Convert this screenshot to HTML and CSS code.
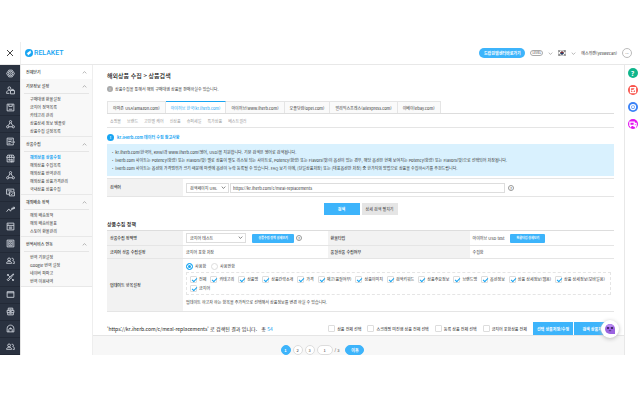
FILE: index.html
```html
<!DOCTYPE html>
<html lang="ko">

<head>
    <meta charset="UTF-8">
    <title>RELAKET</title>
    <link rel="stylesheet" href="styles.css">
</head>

<body>
    <svg class="defs">
        <symbol id="up" viewBox="0 0 8 5"><path d="M1 4l3-3 3 3" /></symbol>
        <symbol id="down" viewBox="0 0 8 5"><path d="M1 1l3 3 3-3" /></symbol>
        <symbol id="users" viewBox="0 0 16 16"><circle cx="5.500" cy="6" r="2.500" /><path d="M1 13c0-5 9-5 9 0zM10 4c4-1 4 4 2 4 3 1 3 3 3 5h-3" /></symbol>
    </svg>

    <header class="header">
        <button class="close" aria-label="close"><svg viewBox="0 0 8 8"><path d="M1 1l6 6M7 1L1 7" /></svg></button>
        <a class="logo" href="#">
            <svg viewBox="0 0 16 16"><circle cx="8" cy="8" r="8" fill="#18a5f2" /><path d="M3 9l8-6 1 2-6 5zM13 7l-7 6-1-2 5-5z" fill="#fff" /></svg>
            RELAKET
        </a>
        <div class="user-menu">
            <button class="center-link">드랍윈템센터바로가기</button>
            <span class="level">LEVEL</span>
            <svg class="caret"><use href="#down" /></svg>
            <svg class="flag" viewBox="0 0 16 12"><rect width="16" height="12" fill="#fff" /><path d="M5 6a3 3 0 0 1 6 0z" fill="#d8263c" /><path d="M5 6a3 3 0 0 0 6 0z" fill="#17479e" /><path d="M1 3l2-2M2 4l2-2M12 1l3 2M11 2l3 2M1 9l3 2M2 8l3 2M12 10l2-2M13 11l2-2" stroke="#222" /></svg>
            <svg class="caret"><use href="#down" /></svg>
            <span class="user-name">에스위캔(yeswecan)</span>
            <button class="more" aria-label="more">···</button>
        </div>
    </header>

    <div class="page">
        <nav class="icon-bar">
            <a href="#"><svg viewBox="0 0 16 16"><path d="M5 2h6l4 6-4 6H5L1 8z" /><circle cx="8" cy="8" r="4" /><circle cx="8" cy="8" r="1.500" /></svg></a>
            <a href="#"><svg viewBox="0 0 16 16"><circle cx="6" cy="4" r="2.500" /><path d="M1 13c0-6 5-6 7-4M1 13h5M8 8h7v6H8zM10 8V6h3v2" /></svg></a>
            <a href="#"><svg viewBox="0 0 16 16"><path d="M2 2h12v12H2zM5 2v4h6V2M5 11h6" /></svg></a>
            <a href="#"><svg viewBox="0 0 16 16"><circle cx="8" cy="3" r="2" /><circle cx="3" cy="12" r="2" /><circle cx="13" cy="12" r="2" /><path d="M7 5l-3 5M9 5l3 5M5 12h6" /></svg></a>
            <a href="#"><svg viewBox="0 0 16 16"><path d="M13 7V2H2v12h11v-3M4 5h7M4 8h5M4 11h4M9 9h6M13 7l2 2-2 2" /></svg></a>
            <a href="#"><svg viewBox="0 0 16 16"><path d="M3 2h10l2 4H1zM2 6v8h12V6M6 2v4M10 2v4M5 9h2v2H5zM9 9h2v5H9z" /></svg></a>
            <a href="#"><svg viewBox="0 0 16 16"><circle cx="8" cy="3" r="2" /><circle cx="3" cy="12" r="2" /><circle cx="13" cy="12" r="2" /><path d="M7 5l-3 5M9 5l3 5M5 12h6" /></svg></a>
            <a href="#"><svg viewBox="0 0 16 16"><path d="M14 6V2H1v9h5M3 5h7M6 7h9v7H6zM8 10l2 2 3-3" /></svg></a>
            <a href="#"><svg viewBox="0 0 16 16"><path d="M1 12l4-5 3 4 3-6 1 3 3-4M12 4h3v3" /></svg></a>
            <a href="#"><svg viewBox="0 0 16 16"><path d="M2 2h12v12H2zM2 6h12M5 9h6M5 11h6M4 4h1" /></svg></a>
            <a href="#"><svg viewBox="0 0 16 16"><path d="M2 2h12v12H2zM5 4h6v8H5z" /><circle cx="8" cy="8" r="1.500" /></svg></a>
            <a href="#"><svg><use href="#users" /></svg></a>
            <a href="#"><svg viewBox="0 0 16 16"><path d="M2 2l5 5M14 2L4 14l-2-2L12 2zM10 10l4 4M2 5l3-3M11 14l3-3" /></svg></a>
            <a href="#"><svg viewBox="0 0 16 16"><path d="M2 3h12v10H2zM2 5h12" /></svg></a>
            <a href="#"><svg viewBox="0 0 16 16"><path d="M4 6V2h8v4M2 6h12v4H2zM3 10v4h10v-4M6 4h4M6 8h4M6 12h4" /></svg></a>
            <a href="#"><svg viewBox="0 0 16 16"><path d="M2 14V8c0-8 12-8 12 0v6zM5 14v-4c0-3 6-3 6 0v4" /><circle cx="8" cy="8" r="1" /></svg></a>
            <a href="#"><svg><use href="#users" /></svg></a>
        </nav>

        <aside class="side-menu">
            <button class="menu-title close-all">전체닫기<svg class="caret"><use href="#up" /></svg></button>
            <section class="menu-group">
                <button class="menu-title">기본정보 설정<svg class="caret"><use href="#up" /></svg></button>
                <ul>
                    <li><a href="#">구매대행 환율설정</a></li>
                    <li><a href="#">금지어 정책목록</a></li>
                    <li><a href="#">카테고리 관리</a></li>
                    <li><a href="#">상품상세 정보 템플릿</a></li>
                    <li><a href="#">상품수집 설정목록</a></li>
                </ul>
            </section>
            <section class="menu-group">
                <button class="menu-title">상품수집<svg class="caret"><use href="#up" /></svg></button>
                <ul>
                    <li><a class="active" href="#">해외상품 상품수집</a></li>
                    <li><a href="#">해외상품 수집목록</a></li>
                    <li><a href="#">해외상품 번역관리</a></li>
                    <li><a href="#">해외상품 상품가격관리</a></li>
                    <li><a href="#">국내상품 상품수집</a></li>
                </ul>
            </section>
            <section class="menu-group">
                <button class="menu-title">해외배송 정책<svg class="caret"><use href="#up" /></svg></button>
                <ul>
                    <li><a href="#">해외 배송정책</a></li>
                    <li><a href="#">해외 배송비율표</a></li>
                    <li><a href="#">스토어 환율관리</a></li>
                </ul>
            </section>
            <section class="menu-group">
                <button class="menu-title">번역서비스 연동<svg class="caret"><use href="#up" /></svg></button>
                <ul>
                    <li><a href="#">번역 기본설정</a></li>
                    <li><a href="#">Google 번역 설정</a></li>
                    <li><a href="#">네이버 파파고</a></li>
                    <li><a href="#">번역 이용내역</a></li>
                </ul>
            </section>
        </aside>

        <main class="main">
            <div class="content">
                <h1>해외상품 수집 &gt; 상품검색</h1>
                <p class="intro"><span class="dot">!</span>상품수집을 통해서 해외 구매대행 상품을 판매하실수 있습니다.</p>

                <nav class="tabs">
                    <a href="#">아마존 USA(amazon.com)</a>
                    <a class="active" href="#">아이허브 한국(kr.iherb.com)</a>
                    <a href="#">아이허브(www.iherb.com)</a>
                    <a href="#">오플닷컴(opel.com)</a>
                    <a href="#">알리익스프레스(aliexpress.com)</a>
                    <a href="#">이베이(ebay.com)</a>
                </nav>
                <nav class="categories">
                    <a href="#">쇼핑몰</a>
                    <a href="#">브랜드</a>
                    <a href="#">고민별 케어</a>
                    <a href="#">신상품</a>
                    <a href="#">슈퍼세일</a>
                    <a href="#">특가상품</a>
                    <a href="#">베스트셀러</a>
                </nav>

                <h2 class="notice-title"><span>!</span>kr.iHerb.com 데이터 수집 참고사항</h2>
                <ul class="notice">
                    <li>kr.iherb.com(한국어, KRW)과 www.iherb.com(영어, USD)을 지원합니다. 기본 검색은 영어로 검색됩니다.</li>
                    <li>iHerb.com 사이트는 Potency(함량) 또는 Flavors(맛) 별로 상품이 별도 리스팅 되는 사이트로, Potency(함량) 또는 Flavors(맛)이 옵션이 있는 경우, 해당 옵션은 현재 보여지는 Potency(함량) 또는 Flavors(맛)으로 선택되어 저장됩니다.</li>
                    <li>iHerb.com 사이트는 옵션의 가격범위가 크기 때문에 마켓에 옵션이 누락 등록될 수 있습니다. FAQ 보기 이에, [단일상품저장] 또는 [대표옵션만 저장] 중 한가지의 방법으로 상품을 수집하시기를 추천드립니다.</li>
                </ul>

                <form class="search">
                    <label class="search-label" for="keyword">검색어</label>
                    <div class="search-field">
                        <div class="select url-select">
                            <select aria-label="검색 방법"><option>검색페이지 URL</option></select>
                            <svg class="caret"><use href="#down" /></svg>
                        </div>
                        <input id="keyword" type="text" value="https://kr.iherb.com/c/meal-replacements">
                        <span class="help">?</span>
                    </div>
                </form>
                <div class="search-buttons">
                    <button class="primary">검색</button>
                    <button>상세 검색 펼치기</button>
                </div>

                <h2>상품수집 정책</h2>
                <table class="policy">
                    <tr>
                        <th><label for="policy">상품수집 정책명</label></th>
                        <td>
                            <div class="cell">
                                <div class="select policy-select">
                                    <select id="policy"><option>금지어 테스트</option></select>
                                    <svg class="caret"><use href="#down" /></svg>
                                </div>
                                <button class="small-button">상품수집 정책 상세보기</button>
                                <span class="help">?</span>
                            </div>
                        </td>
                        <th>환율타입</th>
                        <td>
                            <div class="cell">아이허브 USD test<button class="small-button rate-button">환율타입 상세보기</button></div>
                        </td>
                    </tr>
                    <tr class="short">
                        <th>금지어 상품 수집설정</th>
                        <td>금지어 포함 저장</td>
                        <th>품절상품 수집여부</th>
                        <td>수집함</td>
                    </tr>
                    <tr>
                        <th>업데이트 항목설정</th>
                        <td colspan="3">
                            <div class="radios">
                                <label><input type="radio" name="use" checked>사용함</label>
                                <label><input type="radio" name="use">사용안함</label>
                            </div>
                            <div class="checks">
                                <label><input type="checkbox" checked>전체</label>
                                <label><input type="checkbox" checked>카테고리</label>
                                <label><input type="checkbox" checked>상품명</label>
                                <label><input type="checkbox" checked>상품간략소개</label>
                                <label><input type="checkbox" checked>가격</label>
                                <label><input type="checkbox" checked>재고(품절여부)</label>
                                <label><input type="checkbox" checked>상품이미지</label>
                                <label><input type="checkbox" checked>검색키워드</label>
                                <label><input type="checkbox" checked>상품주요정보</label>
                                <label><input type="checkbox" checked>브랜드명</label>
                                <label><input type="checkbox" checked>옵션정보</label>
                                <label><input type="checkbox" checked>상품 상세정보(웹용)</label>
                                <label><input type="checkbox" checked>상품 상세정보(모바일용)</label>
                                <label><input type="checkbox" checked>금지어</label>
                            </div>
                            <p class="hint">업데이트 하고자 하는 항목을 추가적으로 선택해서 상품정보를 변경 하실 수 있습니다.</p>
                        </td>
                    </tr>
                </table>

                <div class="result">
                    <p>'https://kr.iherb.com/c/meal-replacements' 로 검색된 결과 입니다. &nbsp; 총 <b>54</b></p>
                    <div class="result-actions">
                        <label><input type="checkbox">상품 전체 선택</label>
                        <label><input type="checkbox">스크래핑 미진행 상품 전체 선택</label>
                        <label><input type="checkbox">등록 상품 전체 선택</label>
                        <label><input type="checkbox">금지어 포함상품 전체</label>
                        <div class="save-buttons">
                            <button class="primary">선택 상품저장/수정</button>
                            <button class="primary">검색 상품저장</button>
                        </div>
                    </div>
                </div>
            </div>

            <div class="paging">
                <button class="current">1</button>
                <button>2</button>
                <button>3</button>
                <input type="text" value="1" aria-label="page"><span>/ 3</span>
                <button class="go">이동</button>
            </div>

            <button class="chat" aria-label="chat">
                <svg viewBox="0 0 24 24"><path d="M12 2a10 10 0 1 0 0 20h10V12A10 10 0 0 0 12 2z" fill="#9b63e0" /><path d="M3 8a10 10 0 0 1 18 0c-3-2-5 0-9 0S6 6 3 8z" fill="#b98af0" /><circle cx="8" cy="10" r="2" fill="#2a1747" /><circle cx="16" cy="10" r="2" fill="#2a1747" /><path d="M9 15q3 3 6 0z" fill="#2a1747" /></svg>
            </button>
        </main>

        <aside class="quick">
            <a class="green" href="#">?</a>
            <a class="red" href="#"><svg viewBox="0 0 16 16"><path d="M4 4h8v8H4zM6 8l2 2 4-5" /></svg></a>
            <a class="blue" href="#"><svg viewBox="0 0 16 16"><circle cx="8" cy="8" r="4" /><path d="M6 8h4M8 6v4" /></svg></a>
            <a class="pink" href="#"><svg viewBox="0 0 16 16"><path d="M3 5h7v5H6l-2 2v-2H3zM10 7h3v4h-1v2l-2-2H8" /></svg></a>
        </aside>
    </div>
</body>

</html>
```

FILE: styles.css
```css
* {
    box-sizing: border-box;
}

body {
    margin: 0;
    padding-top: 42px;
    background: #fff;
    color: #333;
    font-family: "Noto Sans CJK KR", sans-serif;
    font-size: 4px;
    line-height: 8px;
    white-space: nowrap;
    overflow: hidden;
}

h1,
h2,
p,
ul {
    margin: 0;
    padding: 0;
    list-style: none;
}

a {
    color: inherit;
    text-decoration: none;
}

button,
input,
select {
    font: inherit;
    color: inherit;
    margin: 0;
    padding: 0;
    border: 0;
    background: none;
    appearance: none;
}

svg {
    fill: none;
    stroke: currentColor;
}

.defs {
    display: none;
}

.caret {
    width: 5px;
    height: 3px;
    flex: none;
    color: #888;
}

/* Header */
.header {
    display: flex;
    align-items: center;
    height: 23px;
    border-bottom: 1px solid #e8e8e8;
}

.close {
    width: 21px;
    height: 22px;
    border-right: 1px solid #eee;
    color: #444;
}

.close svg {
    display: block;
    width: 8px;
    margin: auto;
}

.logo {
    display: flex;
    align-items: center;
    gap: 1px;
    margin-left: 4px;
    color: #18a5f2;
    font: 500 7px/8px Roboto, sans-serif;
}

.logo svg {
    width: 8px;
    height: 8px;
    stroke: none;
}

.user-menu {
    display: flex;
    align-items: center;
    gap: 5px;
    margin-left: auto;
    padding-right: 8px;
}

.center-link {
    width: 46px;
    height: 10px;
    border-radius: 5px;
    background: #3db4fb;
    color: #fff;
    font-weight: bold;
}

.level {
    width: 13px;
    height: 6px;
    border: 1px solid #aaa;
    border-radius: 3px;
    font-size: 3px;
    line-height: 4px;
    text-align: center;
}

.flag {
    width: 8px;
    height: 6px;
}

.more {
    width: 10px;
    height: 10px;
    border: 1px solid #bbb;
    border-radius: 50%;
    line-height: 6px;
}

/* Columns */
.page {
    display: flex;
}

.icon-bar {
    display: flex;
    flex-direction: column;
    flex: none;
    width: 20px;
    background: #2a3240;
    color: #d5dae2;
}

.icon-bar a {
    display: flex;
    align-items: center;
    justify-content: center;
    flex: 1;
    border-bottom: 1px solid #222936;
}

.icon-bar svg {
    width: 9px;
    height: 9px;
    stroke-width: 1.5;
}

.side-menu {
    flex: none;
    width: 73px;
    border-left: 1px solid #e5e5e5;
    border-right: 1px solid #eee;
}

.menu-title {
    display: flex;
    align-items: center;
    justify-content: space-between;
    width: 100%;
    height: 14px;
    padding: 0 5px;
    color: #333;
    font-weight: 500;
}

.menu-group {
    padding: 0 3px 1px;
    border-bottom: 1px solid #e8e8e8;
    background: #f8f8f8;
}

.menu-group .menu-title {
    padding: 0 2px;
}

.menu-group ul {
    padding: 1px 0 0 6px;
    border-top: 1px solid #e5e5e5;
}

.menu-group .active {
    color: #18a5f2;
    font-weight: bold;
}

.main {
    position: relative;
    flex: 1;
    min-width: 0;
}

.content {
    padding: 7px 10px 0 14px;
    border-bottom: 1px solid #e5e5e5;
}

h1 {
    color: #222;
    font-size: 6px;
    font-weight: 500;
}

h2 {
    color: #222;
    font-size: 5px;
    font-weight: 500;
}

.intro {
    display: flex;
    align-items: center;
    gap: 2px;
    margin: 5px 0 8px;
}

.dot,
.help {
    width: 6px;
    height: 6px;
    border-radius: 50%;
    line-height: 6px;
    text-align: center;
}

.dot {
    background: #aaa;
    color: #fff;
}

.help {
    flex: none;
    border: 1px solid #999;
    line-height: 4px;
}

/* Tabs */
.tabs {
    display: flex;
    border-bottom: 1px solid #ddd;
}

.tabs a {
    height: 12px;
    padding: 0 5px;
    border: 1px solid #e5e5e5;
    border-width: 1px 1px 0 0;
    background: #fafafa;
    line-height: 12px;
}

.tabs a:first-child {
    border-left-width: 1px;
}

.tabs .active {
    border-top-color: #18a5f2;
    background: #fff;
    color: #18a5f2;
}

.categories {
    display: flex;
    gap: 6px;
    padding: 3px 3px 2px;
    border-bottom: 1px solid #e5e5e5;
    color: #999;
}

.notice-title {
    display: flex;
    align-items: center;
    gap: 3px;
    margin: 5px 0 3px;
    color: #18a5f2;
    font-size: 4px;
    font-weight: bold;
}

.notice-title span {
    width: 7px;
    height: 7px;
    border-radius: 50%;
    background: #18a5f2;
    color: #fff;
    line-height: 7px;
    text-align: center;
}

.notice {
    padding: 4px 5px;
    background: #d9f1fe;
    overflow: hidden;
}

.notice li::before {
    content: "·";
    margin-right: 2px;
    font-weight: bold;
}

/* Search */
.search {
    display: flex;
    margin-top: 2px;
    border: 1px solid #e5e5e5;
    border-width: 1px 0;
}

.search-label {
    flex: none;
    width: 15%;
    padding-left: 3px;
    background: #f2f2f2;
    line-height: 17px;
    font-weight: 500;
}

.search-field {
    display: flex;
    align-items: center;
    flex: 1;
    gap: 1px;
    padding: 0 100px 0 3px;
}

.search-field input {
    flex: 1;
    height: 10px;
    margin-right: 2px;
    padding: 0 2px;
    border: 1px solid #ddd;
}

.select {
    position: relative;
    flex: none;
}

.select select {
    display: block;
    width: 100%;
    height: 10px;
    padding-left: 3px;
    border: 1px solid #ddd;
    background: #fff;
}

.select .caret {
    position: absolute;
    top: 3px;
    right: 3px;
    color: #333;
}

.url-select {
    width: 43px;
}

.policy-select {
    width: 60px;
}

.search-buttons {
    display: flex;
    justify-content: center;
    gap: 2px;
    margin: 6px 0 5px;
}

.search-buttons button {
    width: 36px;
    height: 12px;
    background: #e5e5e5;
}

button.primary {
    background: #3db4fb;
    color: #fff;
    font-weight: bold;
}

/* Policy table */
.policy {
    width: 100%;
    margin-top: 2px;
    border-collapse: collapse;
    table-layout: fixed;
    border-top: 1px solid #ddd;
}

.policy tr {
    height: 15px;
    border-bottom: 1px solid #e5e5e5;
}

.policy .short {
    height: 13px;
}

.policy th {
    width: 15%;
    padding: 0 0 0 3px;
    background: #f2f2f2;
    color: #222;
    font-weight: 500;
    text-align: left;
}

.policy th:nth-child(3) {
    width: 28%;
}

.policy td {
    padding: 0 3px;
}

.cell {
    display: flex;
    align-items: center;
}

.small-button {
    width: 42px;
    height: 9px;
    margin: 0 2px 0 6px;
    border-radius: 1px;
    background: #3db4fb;
    color: #fff;
    font-size: 3px;
    font-weight: bold;
}

.rate-button {
    width: 35px;
}

label {
    display: flex;
    align-items: center;
    gap: 2px;
}

.radios {
    display: flex;
    gap: 5px;
    padding: 3px 0 2px;
}

input[type="checkbox"],
input[type="radio"] {
    flex: none;
    width: 7px;
    height: 7px;
    border: 1px solid #ddd;
    border-radius: 1px;
    background: #fff;
}

input[type="radio"] {
    border-radius: 50%;
}

input[type="radio"]:checked {
    border-color: #18a5f2;
    background: #18a5f2;
    box-shadow: inset 0 0 0 1px #fff;
}

input[type="checkbox"]:checked::before {
    content: "";
    display: block;
    width: 4px;
    height: 2px;
    margin: 1px 0 0 1px;
    border: solid #18a5f2;
    border-width: 0 0 1px 1px;
    transform: rotate(-45deg);
}

.checks {
    display: flex;
    flex-wrap: wrap;
    gap: 1px 4px;
    padding: 2px 3px;
    border: 1px dashed #e5e5e5;
}

.hint {
    padding: 3px 0 5px;
}

/* Result bar */
.result {
    display: flex;
    align-items: center;
    justify-content: space-between;
    padding-top: 10px;
    color: #222;
}

.result p {
    font-size: 5px;
}

.result b {
    color: #18a5f2;
    font-weight: normal;
}

.result-actions {
    display: flex;
    gap: 6px;
}

.save-buttons {
    display: flex;
    gap: 1px;
}

.save-buttons button {
    width: 40px;
    height: 13px;
}

.paging {
    display: flex;
    align-items: center;
    justify-content: center;
    gap: 2px;
    padding: 9px 72px 0 0;
    background: #f7f7f7;
}

.paging button,
.paging input {
    width: 10px;
    height: 10px;
    border: 1px solid #ddd;
    border-radius: 5px;
    background: #fff;
    text-align: center;
    line-height: 8px;
}

.paging input {
    width: 16px;
}

.paging .current,
.paging .go {
    border-color: #3db4fb;
    background: #3db4fb;
    color: #fff;
    font-weight: bold;
}

.paging .go {
    width: 19px;
    margin-left: 4px;
}

.chat {
    position: absolute;
    right: 5px;
    bottom: 17px;
    display: flex;
    align-items: center;
    justify-content: center;
    width: 18px;
    height: 18px;
    border-radius: 50%;
    background: #fff;
    box-shadow: 0 1px 4px #bbb;
}

.chat svg {
    width: 12px;
    height: 12px;
    stroke: none;
}

/* Quick links */
.quick {
    display: flex;
    flex-direction: column;
    align-items: center;
    gap: 7px;
    flex: none;
    width: 16px;
    padding-top: 3px;
    border-left: 1px solid #e8e8e8;
}

.quick a {
    display: flex;
    align-items: center;
    justify-content: center;
    width: 10px;
    height: 10px;
    border-radius: 50%;
    color: #fff;
    font-size: 7px;
    font-weight: bold;
}

.quick svg {
    width: 10px;
    height: 10px;
    stroke-width: 2;
}

.green {
    background: #0fb58b;
}

.red {
    background: #f9534b;
}

.blue {
    background: #3b82f6;
}

.pink {
    background: #e312f0;
}
```
